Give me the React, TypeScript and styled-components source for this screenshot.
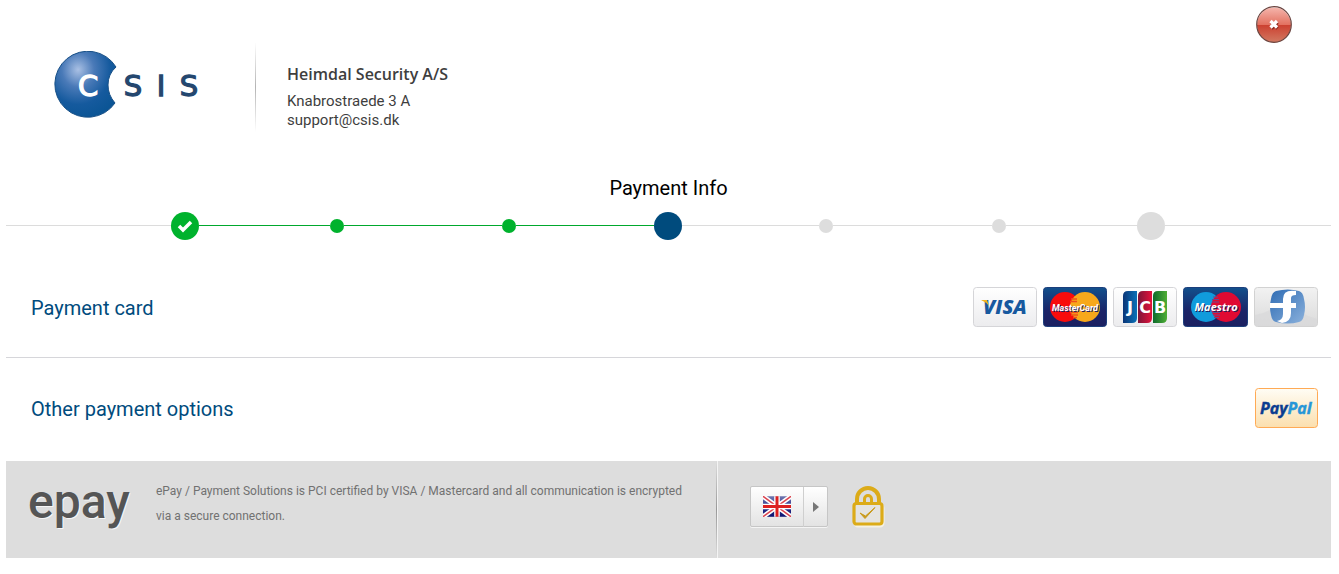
import React from "react";
import styled, { createGlobalStyle } from "styled-components";

const GlobalStyle = createGlobalStyle`
  * { box-sizing: border-box; }
  body {
    margin: 0;
    background: #fff;
    color: #3e3e3e;
    font-family: Roboto, "Liberation Sans", sans-serif;
  }
`;

const Page = styled.main`
  padding: 6px 8px 16px 6px;
`;

const Header = styled.header`
  display: flex;
  align-items: flex-start;
  padding: 0 39px 0 48px;
`;

const Merchant = styled.div`
  display: flex;
  align-items: center;
  padding-top: 36px;
`;

const Divider = styled.div`
  width: 1px;
  height: 90px;
  margin: 0 31px 0 53px;
  background: linear-gradient(#fff, #b4b4b4 50%, #fff);
`;

const Address = styled.address`
  padding-top: 20px;
  font-style: normal;
  font-size: 15px;
  line-height: 19px;
`;

const MerchantName = styled.h1`
  margin: 0 0 8px;
  font: 600 16px/20px "Open Sans", "Noto Sans", sans-serif;
`;

const CloseButton = styled.button`
  display: flex;
  margin-left: auto;
  padding: 0;
  border: 0;
  background: none;
  cursor: pointer;
`;

const StepTitle = styled.h2`
  margin: 44px 0 12px;
  color: #000;
  font-size: 20px;
  font-weight: 400;
  line-height: 24px;
  text-align: center;
`;

const Stepper = styled.div`
  display: flex;
  align-items: center;
`;

const Track = styled.span<{ $grow: number; $done?: boolean }>`
  flex: ${(p) => p.$grow} 1 0;
  height: 1px;
  margin-bottom: 1px;
  background: ${(p) => (p.$done ? "#00a82d" : "#dcdcdc")};
`;

const stepColors = { done: "#00b22d", current: "#004b7d", todo: "#dddddd" };

const Step = styled.span<{ $state: keyof typeof stepColors; $large?: boolean }>`
  display: flex;
  align-items: center;
  justify-content: center;
  flex: none;
  width: ${(p) => (p.$large ? 28 : 14)}px;
  height: ${(p) => (p.$large ? 28 : 14)}px;
  border-radius: 50%;
  background: ${(p) => stepColors[p.$state]};
`;

const Option = styled.a`
  display: flex;
  align-items: center;
  justify-content: space-between;
  min-height: 100px;
  padding: 0 13px 0 25px;
  color: #004b7d;
  font-size: 20px;
  line-height: 24px;
  text-decoration: none;
`;

const OptionLabel = styled.span`
  padding-top: 2px;
`;

const OptionList = styled.nav`
  padding: 17px 0 3px;

  ${Option} + ${Option} {
    min-height: 101px;
    border-top: 1px solid #d6d6da;
  }
`;

const Cards = styled.span`
  display: flex;
  gap: 6px;
`;

const Footer = styled.footer`
  display: flex;
  min-height: 97px;
  background: #dddddd;
`;

const Notice = styled.div`
  display: flex;
  align-items: flex-start;
  flex: 0 1 710px;
  gap: 24px;
  padding: 18px 24px 18px 22px;
`;

const EpayLogo = styled.strong`
  flex: none;
  min-width: 104px;
  color: #555;
  font-size: 48px;
  font-weight: 500;
  line-height: 46px;
  text-shadow: 1px 1px 0 #f6f6f6;
`;

const NoticeText = styled.p`
  margin: 0;
  color: #717171;
  font-size: 12px;
  line-height: 25px;
`;

const Groove = styled.div`
  flex: none;
  width: 2px;
  background: linear-gradient(90deg, transparent 50%, #f4f4f4 50%),
    linear-gradient(#dddddd, #999 50%, #dddddd);
`;

const Tools = styled.div`
  display: flex;
  align-items: flex-start;
  gap: 24px;
  padding: 25px 32px;
`;

const LanguageButton = styled.button`
  display: flex;
  align-items: center;
  width: 78px;
  height: 41px;
  padding: 0;
  border: 1px solid #c6c6c6;
  border-radius: 2px;
  background: linear-gradient(#fff, #e3e3e3);
  box-shadow: 0 1px 0 #f4f4f4;
  cursor: pointer;
`;

const FlagCell = styled.span`
  display: flex;
  justify-content: center;
  flex: 1;
`;

const ArrowCell = styled.span`
  display: flex;
  justify-content: center;
  width: 24px;
  padding: 15px 0;
  border-left: 1px solid #cfcfcf;
`;

const Drawing = styled.svg`
  display: block;
  flex: none;
`;

function CsisLogo() {
  return (
    <Drawing width="148" height="72" viewBox="0 0 148 72" role="img" aria-label="CSIS">
      <defs>
        <radialGradient id="globe" cx="0.38" cy="0.28" r="0.75">
          <stop offset="0" stopColor="#a9c0e4" />
          <stop offset="0.35" stopColor="#4a7ab8" />
          <stop offset="0.7" stopColor="#155a9e" />
          <stop offset="1" stopColor="#0b5595" />
        </radialGradient>
      </defs>
      <path
        d="M62 16 A33 33 0 1 0 61 52 Q54 44 54 34 Q54 23 62 16Z"
        fill="url(#globe)"
        stroke="#174f86"
      />
      <g fontFamily="DejaVu Sans" fontSize="29" strokeWidth="1.3" textAnchor="middle">
        <text x="34" y="45" fill="#fff" stroke="#fff">C</text>
        <g fill="#24476f" stroke="#24476f">
          <text x="79" y="45">S</text>
          <text x="107" y="45">I</text>
          <text x="135" y="45">S</text>
        </g>
      </g>
    </Drawing>
  );
}

function CloseIcon() {
  return (
    <Drawing width="36" height="38" viewBox="0 0 36 38" aria-hidden="true">
      <defs>
        <linearGradient id="closeTop" x2="0" y2="1">
          <stop offset="0" stopColor="#f5b5ac" />
          <stop offset="1" stopColor="#e2705f" />
        </linearGradient>
        <linearGradient id="closeBottom" x2="0" y2="1">
          <stop offset="0" stopColor="#cc4030" />
          <stop offset="1" stopColor="#d27a62" />
        </linearGradient>
      </defs>
      <path d="M1 19a17 17.500 0 0 1 34 0z" fill="url(#closeTop)" />
      <path d="M1 19a17 17.500 0 0 0 34 0z" fill="url(#closeBottom)" />
      <ellipse cx="18" cy="18.500" rx="17.300" ry="17.800" fill="none" stroke="#6b4540" strokeWidth="1.200" />
      <path d="M15.500 16.500l6 6m0-6l-6 6" stroke="#8d2a20" strokeWidth="3.400" />
      <path d="M14.500 15l6.500 6.500m0-6.500l-6.500 6.500" stroke="#fff" strokeWidth="3.200" />
    </Drawing>
  );
}

function CardDefs() {
  return (
    <defs>
      <linearGradient id="paper" x2="0" y2="1">
        <stop offset="0" stopColor="#ffffff" />
        <stop offset="1" stopColor="#ececee" />
      </linearGradient>
      <linearGradient id="silver" x2="0" y2="1">
        <stop offset="0" stopColor="#f2f2f2" />
        <stop offset="1" stopColor="#dadada" />
      </linearGradient>
      <linearGradient id="navy" x2="0" y2="1">
        <stop offset="0" stopColor="#12508c" />
        <stop offset="0.6" stopColor="#1b2468" />
        <stop offset="1" stopColor="#1b2060" />
      </linearGradient>
      <linearGradient id="cream" x2="0" y2="1">
        <stop offset="0" stopColor="#fffdf5" />
        <stop offset="1" stopColor="#fbdfae" />
      </linearGradient>
      <linearGradient id="jcbBlue">
        <stop offset="0" stopColor="#0a3577" />
        <stop offset="1" stopColor="#0b72b8" />
      </linearGradient>
      <linearGradient id="jcbRed">
        <stop offset="0" stopColor="#7c1538" />
        <stop offset="1" stopColor="#e4123c" />
      </linearGradient>
      <linearGradient id="jcbGreen">
        <stop offset="0" stopColor="#0e6b2c" />
        <stop offset="1" stopColor="#4fae35" />
      </linearGradient>
      <linearGradient id="forbrug" x2="1" y2="1">
        <stop offset="0" stopColor="#2e6cb4" />
        <stop offset="1" stopColor="#8bb1dc" />
      </linearGradient>
    </defs>
  );
}

interface CardProps {
  label: string;
  fill: string;
  border: string;
  width?: number;
  children: React.ReactNode;
}

function Card({ label, fill, border, width = 64, children }: CardProps) {
  return (
    <Drawing width={width} height="40" viewBox={`0 0 ${width} 40`} role="img" aria-label={label}>
      <CardDefs />
      <rect x="0.500" y="0.500" width={width - 1} height="39" rx="3" fill={`url(#${fill})`} stroke={border} />
      {children}
    </Drawing>
  );
}

const cardText = { fontFamily: "Open Sans", fontWeight: 700, fontStyle: "italic" } as const;

function VisaCard() {
  return (
    <Card label="Visa" fill="paper" border="#d5d5d8">
      <text x="10" y="27" {...cardText} fontWeight={800} fontSize="20" fill="#17599f">VISA</text>
      <path d="M8 13h6l2 6q-3-4-8-6z" fill="#f0b21c" />
    </Card>
  );
}

function MasterCard() {
  return (
    <Card label="MasterCard" fill="navy" border="#1c3f7c">
      <circle cx="22" cy="20" r="15" fill="#f80c0c" />
      <circle cx="42" cy="20" r="15" fill="#f7a81b" />
      <path d="M28 12h6M27 14.500h7M27 25.500h8M28 28h7M30 30.500h4" stroke="#f0501a" strokeWidth="1.300" />
      <g fontFamily="Roboto" fontWeight="700" fontStyle="italic" fontSize="9" textAnchor="middle">
        <text x="33" y="25" fill="#1b2060">MasterCard</text>
        <text x="32" y="24" fill="#fff">MasterCard</text>
      </g>
    </Card>
  );
}

function JcbCard() {
  return (
    <Card label="JCB" fill="paper" border="#d5d5d8">
      <path d="M10 9q0-5 5-5h9v27q0 5-5 5h-9z" fill="url(#jcbBlue)" />
      <path d="M25 9q0-5 5-5h9v27q0 5-5 5h-9z" fill="url(#jcbRed)" />
      <path d="M40 9q0-5 5-5h9v27q0 5-5 5h-9z" fill="url(#jcbGreen)" />
      <g fontFamily="DejaVu Sans" fontWeight="700" fontSize="16" fill="#fff" textAnchor="middle">
        <text x="17" y="26">J</text>
        <text x="32" y="26">C</text>
        <text x="47" y="26">B</text>
      </g>
    </Card>
  );
}

function MaestroCard() {
  return (
    <Card label="Maestro" fill="navy" border="#1c3f7c" width={65}>
      <circle cx="23" cy="20" r="15" fill="#109bdc" />
      <circle cx="43" cy="20" r="15" fill="#e00a32" />
      <path d="M30 10h5M29 12.500h7M29 15h7M29 25.500h8M30 28h7M31 30.500h5" stroke="#6a4a8c" strokeWidth="1.200" />
      <g {...cardText} fontSize="11" textAnchor="middle">
        <text x="34" y="25" fill="#1b2060">Maestro</text>
        <text x="33" y="24" fill="#fff">Maestro</text>
      </g>
    </Card>
  );
}

function ForbrugCard() {
  return (
    <Card label="Forbrugsforeningen" fill="silver" border="#d2d2d2">
      <path d="M1 28q20-4 30-16Q46 28 63 32V39H1z" fill="#d8d8da" opacity="0.700" />
      <path d="M22 4Q34 1 45 4Q49 5 50 12Q52 20 50 28Q49 34 45 35Q34 38 22 35Q18 34 17 28Q15 20 17 12Q18 5 22 4z" fill="url(#forbrug)" />
      <path
        d="M42 4Q29 2 29 12V16H16v5h13v6q0 6-6 7l5 2q9-1 9-10v-5h5v-5h-5v-5q0-3 5-3z"
        fill="#fff"
      />
    </Card>
  );
}

function PayPalCard() {
  return (
    <Card label="PayPal" fill="cream" border="#ffaa55" width={63}>
      <text x="5" y="26" {...cardText} fontSize="16" strokeWidth="0.400">
        <tspan fill="#0b3c90" stroke="#0b3c90">Pay</tspan>
        <tspan fill="#2796d8" stroke="#2796d8">Pal</tspan>
      </text>
    </Card>
  );
}

function FlagIcon() {
  return (
    <Drawing width="28" height="21" viewBox="0 0 30 22" aria-hidden="true">
      <defs>
        <linearGradient id="flagBlue" x2="0" y2="1">
          <stop offset="0" stopColor="#7178b0" />
          <stop offset="0.500" stopColor="#30388c" />
          <stop offset="1" stopColor="#0b1070" />
        </linearGradient>
      </defs>
      <path d="M0 0h30v22H0z" fill="url(#flagBlue)" />
      <path d="M0 0l30 22M30 0L0 22" stroke="#fff" strokeWidth="5" />
      <path d="M0 0l30 22M30 0L0 22" stroke="#dc4550" strokeWidth="1.600" />
      <path d="M15 0v22M0 11h30" stroke="#fff" strokeWidth="6" />
      <path d="M15 0v22M0 11h30" stroke="#dc2020" strokeWidth="3.200" />
    </Drawing>
  );
}

function LockIcon() {
  return (
    <Drawing width="34" height="42" viewBox="0 0 34 42" role="img" aria-label="Secure connection">
      <rect x="3" y="19" width="28" height="21" rx="3" fill="none" stroke="#f5f1e4" strokeWidth="3" />
      <rect x="2" y="17.500" width="28" height="20.500" rx="2.500" fill="#e4e3e0" stroke="#dcab18" strokeWidth="3.200" />
      <path d="M5 17v-4a11 11 0 0 1 22 0v4" fill="none" stroke="#dcab18" strokeWidth="4" />
      <path d="M12.500 16v-3a3.500 3.500 0 0 1 7 0v3" fill="none" stroke="#dcab18" strokeWidth="3" />
      <path d="M8 27l5 5.500L23 21.500 13.500 30z" fill="#c99a1c" stroke="#c99a1c" strokeWidth="1" />
    </Drawing>
  );
}

export default function App() {
  return (
    <>
      <GlobalStyle />
      <Page>
        <Header>
          <Merchant>
            <CsisLogo />
            <Divider />
            <Address>
              <MerchantName>Heimdal Security A/S</MerchantName>
              Knabrostraede 3 A
              <br />
              support@csis.dk
            </Address>
          </Merchant>
          <CloseButton type="button" aria-label="Close">
            <CloseIcon />
          </CloseButton>
        </Header>

        <StepTitle>Payment Info</StepTitle>
        <Stepper>
          <Track $grow={165} />
          <Step $state="done" $large>
            <Drawing width="16" height="14" viewBox="0 0 16 14" aria-hidden="true">
              <path d="M2 7l4 4L14 3" fill="none" stroke="#fff" strokeWidth="3.500" />
            </Drawing>
          </Step>
          <Track $grow={131} $done />
          <Step $state="done" />
          <Track $grow={158} $done />
          <Step $state="done" />
          <Track $grow={138} $done />
          <Step $state="current" $large />
          <Track $grow={138} />
          <Step $state="todo" />
          <Track $grow={159} />
          <Step $state="todo" />
          <Track $grow={131} />
          <Step $state="todo" $large />
          <Track $grow={166} />
        </Stepper>

        <OptionList>
          <Option href="#card">
            <OptionLabel>Payment card</OptionLabel>
            <Cards>
              <VisaCard />
              <MasterCard />
              <JcbCard />
              <MaestroCard />
              <ForbrugCard />
            </Cards>
          </Option>
          <Option href="#other">
            <OptionLabel>Other payment options</OptionLabel>
            <Cards>
              <PayPalCard />
            </Cards>
          </Option>
        </OptionList>

        <Footer>
          <Notice>
            <EpayLogo>epay</EpayLogo>
            <NoticeText>
              ePay / Payment Solutions is PCI certified by VISA / Mastercard and all communication is
              encrypted via a secure connection.
            </NoticeText>
          </Notice>
          <Groove />
          <Tools>
            <LanguageButton type="button" aria-label="Language: English">
              <FlagCell>
                <FlagIcon />
              </FlagCell>
              <ArrowCell>
                <Drawing width="6" height="10" viewBox="0 0 6 10" aria-hidden="true">
                  <path d="M0 0l6 5-6 5z" fill="#777" />
                </Drawing>
              </ArrowCell>
            </LanguageButton>
            <LockIcon />
          </Tools>
        </Footer>
      </Page>
    </>
  );
}
